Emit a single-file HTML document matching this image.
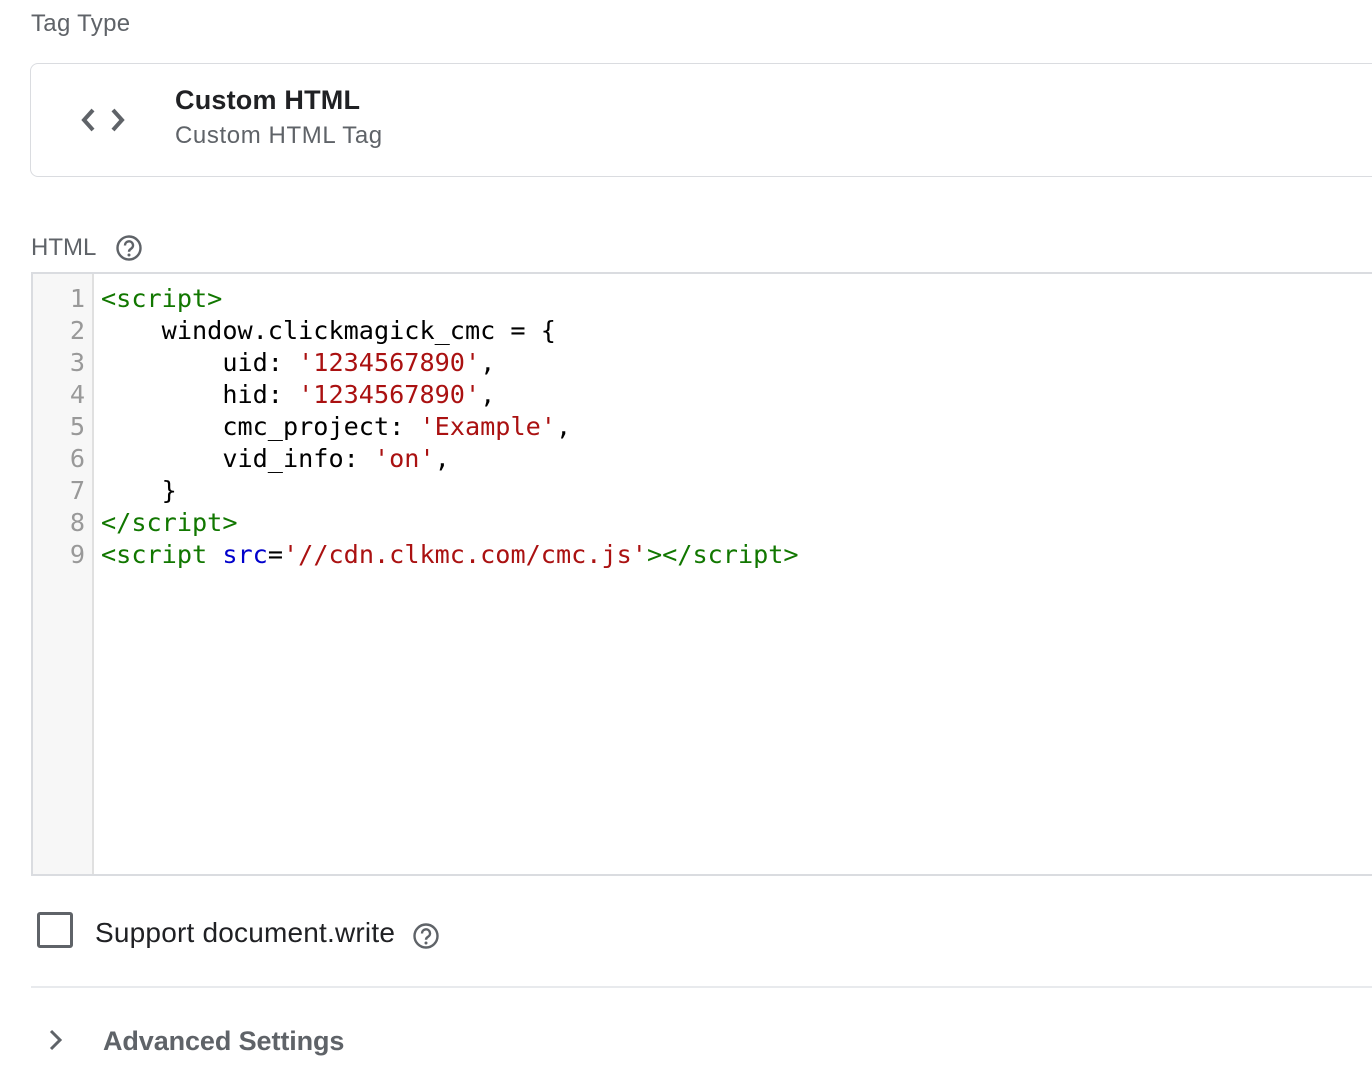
<!DOCTYPE html>
<html><head><style>
body{margin:0;width:1372px;height:1088px;background:#fff;font-family:"Liberation Sans",Roboto,Arial,sans-serif;overflow:hidden;position:relative}
.abs{position:absolute;white-space:nowrap}
.card{position:absolute;left:30px;top:63px;width:1360px;height:114px;border:1.5px solid #dadce0;border-radius:8px;box-sizing:border-box}
.ed{position:absolute;left:31px;top:272px;width:1360px;height:604px;border:2px solid #dadce0;box-sizing:border-box;background:#fff}
.gut{position:absolute;left:0;top:0;width:59px;height:100%;background:#f7f7f7;border-right:2px solid #e0e0e0}
.code{position:absolute;top:283px;font-family:"DejaVu Sans Mono","Liberation Mono",monospace;font-size:25.2px;line-height:32px;white-space:pre;color:#000}
.t{color:#170}.s{color:#a11}.a{color:#00c}
</style></head><body>
<div class="abs" style="left:31px;top:10px;font-size:24px;color:#5f6368;letter-spacing:0.3px">Tag Type</div>
<div class="card"></div>
<svg class="abs" style="left:80px;top:104px" width="46" height="32" viewBox="0 0 46 32"><path d="M13 6 L4 16 L13 26 M33 6 L42 16 L33 26" fill="none" stroke="#5f6368" stroke-width="4"/></svg>
<div class="abs" style="left:175px;top:85px;font-size:27px;font-weight:bold;color:#202124;letter-spacing:0.2px">Custom HTML</div>
<div class="abs" style="left:175px;top:122px;font-size:24px;color:#5f6368;letter-spacing:0.6px">Custom HTML Tag</div>
<div class="abs" style="left:31px;top:234px;font-size:24px;color:#5f6368">HTML</div>
<svg class="abs" style="left:115px;top:234px" width="28" height="28" viewBox="0 0 28 28"><circle cx="14" cy="14" r="11.5" fill="none" stroke="#5f6368" stroke-width="2.4"/><path d="M10 11.5a4 4 0 1 1 6 3.3c-1.3.8-2 1.5-2 3" fill="none" stroke="#5f6368" stroke-width="2.4"/><circle cx="14" cy="21" r="1.5" fill="#5f6368"/></svg>
<div class="ed"><div class="gut"></div></div>
<div class="code" style="left:40px;width:45px;text-align:right;color:#999">1
2
3
4
5
6
7
8
9</div>
<div class="code" style="left:101px"><span class="t">&lt;script&gt;</span>
    window.clickmagick_cmc = {
        uid: <span class="s">'1234567890'</span>,
        hid: <span class="s">'1234567890'</span>,
        cmc_project: <span class="s">'Example'</span>,
        vid_info: <span class="s">'on'</span>,
    }
<span class="t">&lt;/script&gt;</span>
<span class="t">&lt;script</span> <span class="a">src</span>=<span class="s">'//cdn.clkmc.com/cmc.js'</span><span class="t">&gt;&lt;/script&gt;</span></div>
<div class="abs" style="left:37px;top:912px;width:36px;height:36px;border:3px solid #5f6368;border-radius:3px;box-sizing:border-box"></div>
<div class="abs" style="left:95px;top:917px;font-size:28px;color:#202124;letter-spacing:0.2px">Support document.write</div>
<svg class="abs" style="left:412px;top:922px" width="28" height="28" viewBox="0 0 28 28"><circle cx="14" cy="14" r="11.5" fill="none" stroke="#5f6368" stroke-width="2.4"/><path d="M10 11.5a4 4 0 1 1 6 3.3c-1.3.8-2 1.5-2 3" fill="none" stroke="#5f6368" stroke-width="2.4"/><circle cx="14" cy="21" r="1.5" fill="#5f6368"/></svg>
<div class="abs" style="left:31px;top:986px;width:1341px;height:2px;background:#e8eaed"></div>
<svg class="abs" style="left:46px;top:1028px" width="20" height="24" viewBox="0 0 20 24"><path d="M5 3 L14 12 L5 21" fill="none" stroke="#5f6368" stroke-width="3"/></svg>
<div class="abs" style="left:103px;top:1026px;font-size:27px;font-weight:bold;color:#5f6368;letter-spacing:-0.1px">Advanced Settings</div>
</body></html>
